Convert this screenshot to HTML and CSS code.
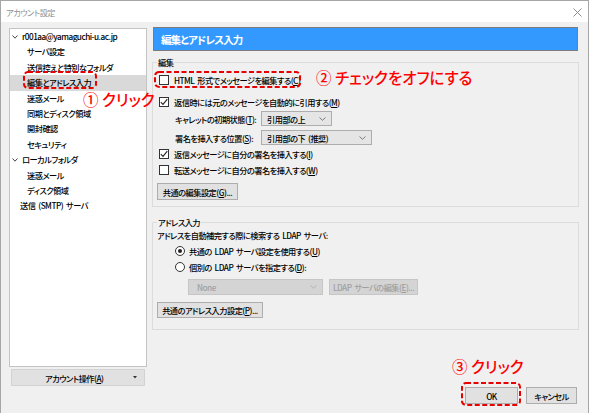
FILE: index.html
```html
<!DOCTYPE html>
<html lang="ja">
<head>
<meta charset="utf-8">
<title>アカウント設定</title>
<link rel="stylesheet" href="styles.css">
</head>
<body>
<div class="window">
  <div class="titlebar">
    <span class="title">アカウント設定</span>
    <svg class="close" width="9" height="9" viewBox="0 0 9 9"><path d="M0.5 0.5L8.5 8.5M8.5 0.5L0.5 8.5" stroke="#8c8c8c" stroke-width="1" fill="none"/></svg>
  </div>
  <div class="main">
    <div class="left">
      <div class="tree">
        <div class="node root"><svg class="chev" width="6" height="4" viewBox="0 0 6 4"><path d="M0.5 0.5L3 3.2L5.5 0.5" stroke="#444" fill="none"/></svg>r001aa@yamaguchi-u.ac.jp</div>
        <div class="node child">サーバ設定</div>
        <div class="node child">送信控えと特別なフォルダ</div>
        <div class="node child selected">編集とアドレス入力</div>
        <div class="node child">迷惑メール</div>
        <div class="node child">同期とディスク領域</div>
        <div class="node child">開封確認</div>
        <div class="node child">セキュリティ</div>
        <div class="node root"><svg class="chev" width="6" height="4" viewBox="0 0 6 4"><path d="M0.5 0.5L3 3.2L5.5 0.5" stroke="#444" fill="none"/></svg>ローカルフォルダ</div>
        <div class="node child">迷惑メール</div>
        <div class="node child">ディスク領域</div>
        <div class="node leaf">送信 (SMTP) サーバ</div>
      </div>
      <div class="acct-btn"><span class="acct-label">アカウント操作(<u>A</u>)</span><svg class="acct-caret" width="4" height="3" viewBox="0 0 4 3"><path d="M0 0H4L2 2.5Z" fill="#333"/></svg></div>
    </div>
    <div class="right">
      <div class="banner">編集とアドレス入力</div>
      <fieldset class="group g1">
        <legend>編集</legend>
        <div class="row r1"><span class="cb"></span><span>HTML 形式でメッセージを編集する(<u>C</u>)</span></div>
        <div class="row r2"><span class="cb checked"><svg width="8" height="8" viewBox="0 0 8 8"><path d="M0.8 4.2L3 6.4L7.3 1.2" stroke="#222" stroke-width="1.1" fill="none"/></svg></span><span>返信時には元のメッセージを自動的に引用する(<u>M</u>)</span></div>
        <div class="row r3"><span class="lbl">キャレットの初期状態(<u>T</u>):</span><span class="select sel1"><span>引用部の上</span><svg width="7" height="4" viewBox="0 0 7 4"><path d="M0.5 0.5L3.5 3.3L6.5 0.5" stroke="#7a7a7a" fill="none"/></svg></span></div>
        <div class="row r4"><span class="lbl">署名を挿入する位置(<u>S</u>):</span><span class="select sel2"><span>引用部の下 (推奨)</span><svg width="7" height="4" viewBox="0 0 7 4"><path d="M0.5 0.5L3.5 3.3L6.5 0.5" stroke="#7a7a7a" fill="none"/></svg></span></div>
        <div class="row r5"><span class="cb checked"><svg width="8" height="8" viewBox="0 0 8 8"><path d="M0.8 4.2L3 6.4L7.3 1.2" stroke="#222" stroke-width="1.1" fill="none"/></svg></span><span>返信メッセージに自分の署名を挿入する(<u>I</u>)</span></div>
        <div class="row r6"><span class="cb"></span><span>転送メッセージに自分の署名を挿入する(<u>W</u>)</span></div>
        <div class="btn btn-edit">共通の編集設定(<u>G</u>)...</div>
      </fieldset>
      <fieldset class="group g2">
        <legend>アドレス入力</legend>
        <div class="row q1">アドレスを自動補完する際に検索する LDAP サーバ:</div>
        <div class="row q2"><span class="radio on"></span><span>共通の LDAP サーバ設定を使用する(<u>U</u>)</span></div>
        <div class="row q3"><span class="radio"></span><span>個別の LDAP サーバを指定する(<u>D</u>):</span></div>
        <div class="row q4"><span class="select disabled dsel"><span>None</span><svg width="7" height="4" viewBox="0 0 7 4"><path d="M0.5 0.5L3.5 3.3L6.5 0.5" stroke="#b4b4b4" fill="none"/></svg></span><span class="btn disabled dbtn">LDAP サーバの編集(<u>E</u>)...</span></div>
        <div class="btn btn-addr">共通のアドレス入力設定(<u>P</u>)...</div>
      </fieldset>
      <div class="footer">
        <div class="btn ok">OK</div>
        <div class="btn cancel">キャンセル</div>
      </div>
    </div>
  </div>

  <div class="mark m1"><svg width="74" height="18" viewBox="0 0 74 18"><rect x="1" y="1" width="72" height="16" rx="4" ry="4"/></svg></div>
  <div class="note n1">① クリック</div>
  <div class="mark m2"><svg width="147" height="17" viewBox="0 0 147 17"><rect x="1" y="1" width="145" height="15" rx="4" ry="4"/></svg></div>
  <div class="note n2">② チェックをオフにする</div>
  <div class="note n3">③ クリック</div>
  <div class="mark m3"><svg width="60" height="24" viewBox="0 0 60 24"><rect x="1" y="1" width="58" height="22" rx="4" ry="4"/></svg></div>
</div>
</body>
</html>
```

FILE: styles.css
```css
* { box-sizing: border-box; }
html, body { margin: 0; padding: 0; }
body {
  width: 590px;
  height: 413px;
  overflow: hidden;
  background: #ffffff;
  font-family: "Noto Sans CJK JP", "Noto Sans", sans-serif;
  font-size: 8.2px;
  font-weight: 500;
  letter-spacing: -0.5px;
  word-spacing: 1.5px;
  color: #000;
  font-feature-settings: "palt";
}
u { text-decoration: underline; text-underline-offset: 1px; }

.window {
  position: relative;
  width: 589px;
  height: 413px;
  border: 1px solid #a6a6a6;
  border-bottom: none;
  background: #f0f0f0;
  display: flex;
  flex-direction: column;
}

.titlebar {
  height: 21px;
  flex: none;
  background: #fff;
  display: flex;
  align-items: center;
  justify-content: space-between;
  padding: 1px 6px 0 5px;
}
.title { color: #8f8f8f; font-weight: 400; }

.main {
  flex: 1;
  display: flex;
  gap: 5px;
  padding: 5px 9px 9px 8px;
  min-height: 0;
}

.left {
  width: 138px;
  flex: none;
  display: flex;
  flex-direction: column;
  padding-bottom: 18px;
}
.tree {
  flex: 1;
  margin-top: 1px;
  background: #fff;
  border: 1px solid #c4c4c4;
}
.node {
  height: 15.4px;
  line-height: 15.4px;
  white-space: nowrap;
  display: flex;
  align-items: center;
}
.node.root { padding-left: 2px; }
.node.root .chev { margin-right: 4px; }
.node.child { padding-left: 17px; }
.node.leaf { padding-left: 10px; }
.node.selected { background: #d9d9d9; }

.acct-btn {
  height: 17px;
  margin: 2px 2px 0;
  background: #e1e1e1;
  border: 1px solid #d2d2d2;
  display: flex;
  align-items: center;
  padding: 0 7px 0 33px;
  justify-content: space-between;
}

.right {
  flex: 1;
  display: flex;
  flex-direction: column;
  min-width: 0;
}
.banner {
  height: 24px;
  margin: 0 1px;
  background: #3399ff;
  border: 1px solid #7c7c7c;
  color: #fff;
  font-weight: bold;
  font-size: 10.5px;
  letter-spacing: -0.9px;
  padding-left: 7px;
  display: flex;
  align-items: center;
}

.group {
  margin: 5px 0 0;
  padding: 0 4px 6px 4px;
  border: 1px solid #dcdcdc;
  min-width: 0;
  display: flex;
  flex-direction: column;
  align-items: flex-start;
}
.group legend {
  padding: 0 1px;
  line-height: 12px;
  height: 12px;
}
.g2 { margin-top: 9px; padding-bottom: 11px; }

.row {
  display: flex;
  align-items: center;
  white-space: nowrap;
  width: 100%;
}
.r1 { margin-top: 4px; height: 16px; }
.r2 { margin-top: 6px; height: 15px; }
.r3 { margin-top: 2px; height: 15px; }
.r4 { margin-top: 4px; height: 15px; }
.r5 { margin-top: 1px; height: 16px; }
.r6 { height: 15px; }

.q1 { height: 14px; }
.q2 { margin-top: 1px; height: 16px; padding-left: 18px; }
.q3 { height: 16px; padding-left: 18px; }
.q4 { margin-top: 4px; height: 16px; padding-left: 31px; gap: 6px; }

.cb {
  width: 10px;
  height: 10px;
  border: 1px solid #333;
  background: #fff;
  margin: 0 5px 0 2px;
  flex: none;
  display: flex;
  align-items: center;
  justify-content: center;
}
.radio {
  width: 10px;
  height: 10px;
  border: 1px solid #333;
  border-radius: 50%;
  background: #fff;
  margin-right: 4px;
  flex: none;
  display: flex;
  align-items: center;
  justify-content: center;
}
.radio.on::after {
  content: "";
  width: 4px;
  height: 4px;
  border-radius: 50%;
  background: #222;
}

.lbl { width: 104px; padding-left: 18px; flex: none; }

.select {
  height: 15px;
  background: #e5e5e5;
  border: 1px solid #adadad;
  display: flex;
  align-items: center;
  justify-content: space-between;
  padding: 0 5px 0 5px;
  flex: none;
}
.sel1 { width: 71px; }
.sel2 { width: 111px; }

.btn {
  height: 17px;
  background: #e1e1e1;
  border: 1px solid #adadad;
  display: flex;
  align-items: center;
  justify-content: center;
  white-space: nowrap;
  flex: none;
}
.btn-edit { margin-top: 6px; width: 81px; }
.btn-addr { margin-top: 7px; width: 106px; height: 16px; }

.disabled {
  background: #d4d4d4;
  border-color: #c6c6c6;
  color: #a0a0a0;
}
.dsel { width: 135px; height: 16px; padding-left: 8px; }
.dbtn { width: 89px; height: 16px; }

.footer {
  margin-top: auto;
  display: flex;
  justify-content: flex-end;
  gap: 8px;
  padding-right: 2px;
}
.ok { width: 53px; }
.cancel { width: 51px; }

/* annotations overlaid on the screenshot */
.mark { position: absolute; line-height: 0; }
.mark rect {
  fill: none;
  stroke: #e60000;
  stroke-width: 2;
  stroke-dasharray: 5 2.5;
}
.m1 { left: 22px; top: 70px; }
.m2 { left: 153px; top: 70px; }
.m3 { left: 460px; top: 381px; }

.note {
  position: absolute;
  color: #ff0000;
  font-size: 15.5px;
  font-weight: 500;
  letter-spacing: 0;
  word-spacing: 0;
  line-height: 20px;
  white-space: nowrap;
}
.n1 { left: 82px; top: 88px; }
.n2 { left: 315px; top: 66px; }
.n3 { left: 451px; top: 355px; }
```
